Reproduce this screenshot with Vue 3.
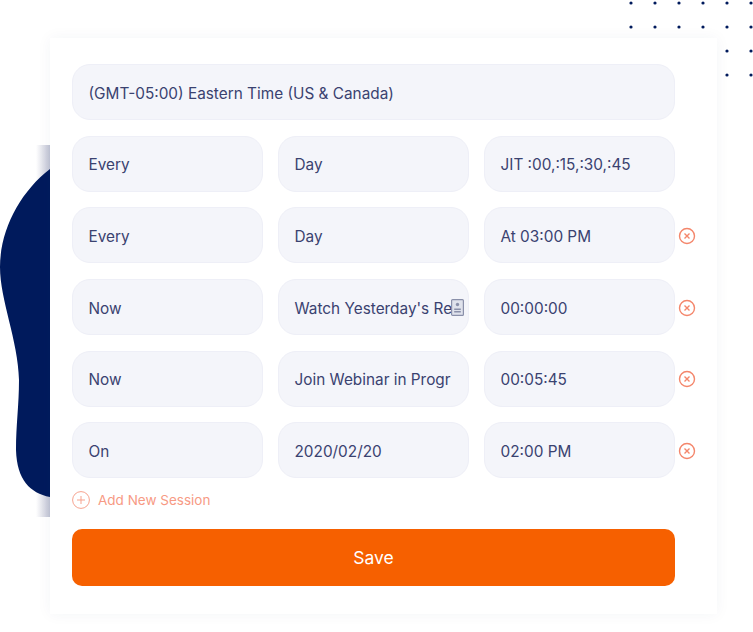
<template>
  <div class="page">
    <div class="strip"></div>
    <svg class="blob" width="50" height="340" viewBox="0 160 50 340">
      <path d="M50 169C20 192 0 230 0 267C0 300 18 340 19 380C19 405 16 425 16 450C17 480 30 493 50 497Z" fill="#001a5c" />
    </svg>
    <svg class="dots" width="133" height="80" viewBox="0 0 133 80">
      <circle v-for="d in dots" :key="d.x + '-' + d.y" :cx="d.x" :cy="d.y" r="1.6" fill="#001a5c" />
    </svg>

    <div class="card">
      <div class="field">(GMT-05:00) Eastern Time (US &amp; Canada)</div>

      <div v-for="(row, i) in rows" :key="i" class="row">
        <div class="field">{{ row[0] }}</div>
        <div class="field clip">
          <span>{{ row[1] }}</span>
          <svg v-if="row[3]" class="contact" width="13" height="17" viewBox="0 0 13 17">
            <rect x="0.6" y="0.6" width="11.8" height="15.8" rx="1" fill="#dfe2ec" stroke="#8a90aa" stroke-width="1.2" />
            <circle cx="6.5" cy="5.5" r="1.7" fill="#8a90aa" />
            <path d="M3.2 9.5h6.6v1.4H3.2zM3.2 12h6.6v1.4H3.2z" fill="#8a90aa" />
          </svg>
        </div>
        <div class="field">{{ row[2] }}</div>
        <svg v-if="i > 0" class="remove" width="18" height="18" viewBox="0 0 18 18" fill="none" stroke="#f4866b" stroke-width="1.4">
          <circle cx="9" cy="9" r="7.5" />
          <path d="M6.5 6.5l5 5M11.5 6.5l-5 5" />
        </svg>
      </div>

      <div class="add">
        <svg width="18" height="18" viewBox="0 0 18 18" fill="none" stroke="#f6a38f" stroke-width="1">
          <circle cx="9" cy="9" r="8.4" />
          <path d="M9 5v8M5 9h8" />
        </svg>
        <span>Add New Session</span>
      </div>

      <button class="save" type="button">Save</button>
    </div>
  </div>
</template>

<script setup>
const rows = [
  ['Every', 'Day', 'JIT :00,:15,:30,:45'],
  ['Every', 'Day', 'At 03:00 PM'],
  ['Now', "Watch Yesterday's Re", '00:00:00', true],
  ['Now', 'Join Webinar in Progr', '00:05:45'],
  ['On', '2020/02/20', '02:00 PM']
]

const dots = []
for (let col = 0; col < 6; col++) {
  for (let line = 0; line < 4; line++) {
    if (line < 2 || col > 3) dots.push({ x: 11 + col * 24, y: 3 + line * 24 })
  }
}
</script>

<style>
body {
  background: #fff;
}
</style>

<style scoped>
.page {
  position: relative;
  width: 753px;
  height: 632px;
  padding: 38px 36px 0 50px;
  box-sizing: border-box;
  overflow: hidden;
  font-family: Inter, "Liberation Sans", sans-serif;
}
.strip {
  position: absolute;
  left: 36px;
  top: 145px;
  width: 14px;
  height: 372px;
  background: linear-gradient(to right, rgba(150, 154, 175, 0), rgba(140, 145, 175, 0.55));
}
.blob {
  position: absolute;
  left: 0;
  top: 160px;
}
.dots {
  position: absolute;
  left: 620px;
  top: 0;
}
.card {
  position: relative;
  display: flex;
  flex-direction: column;
  gap: 15.6px;
  width: 667px;
  height: 576px;
  box-sizing: border-box;
  padding: 26.3px 42px 0 22px;
  background: #fff;
  box-shadow: 0 0 14px rgba(40, 50, 100, 0.05);
}
.field {
  display: flex;
  align-items: center;
  justify-content: space-between;
  height: 56px;
  box-sizing: border-box;
  padding: 2px 15.5px 0;
  background: #f4f5fa;
  border: 1px solid #eeeff7;
  border-radius: 18px;
  font-size: 15.35px;
  color: #3a4270;
  white-space: nowrap;
}
.clip {
  position: relative;
  overflow: hidden;
}
.contact {
  position: absolute;
  right: 4px;
  top: 19px;
}
.row {
  position: relative;
  display: grid;
  grid-template-columns: repeat(3, 191px);
  gap: 15px;
}
.remove {
  position: absolute;
  left: 606px;
  top: 19.5px;
}
.add {
  display: flex;
  align-items: center;
  gap: 8px;
  height: 18px;
  margin-top: -3px;
  font-size: 13.5px;
  color: #f79a84;
}
.save {
  height: 57px;
  margin-top: 4.4px;
  border: none;
  border-radius: 10px;
  background: #f66000;
  color: #fff;
  font-family: Inter, sans-serif;
  font-size: 17.5px;
}
</style>
